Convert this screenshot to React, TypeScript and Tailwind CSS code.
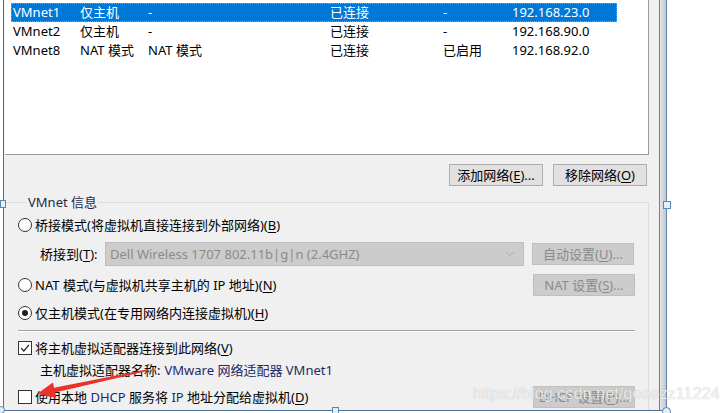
import { ChevronDown } from 'lucide-react';

interface NetRow {
  name: string;
  type: string;
  ext: string;
  host: string;
  dhcp: string;
  subnet: string;
  selected?: boolean;
}

const rows: NetRow[] = [
  { name: 'VMnet0', type: '桥接模式', ext: 'Dell Wireless 1707 802.11b|g|n (2.4GHZ)', host: '-', dhcp: '-', subnet: '-' },
  { name: 'VMnet1', type: '仅主机', ext: '-', host: '已连接', dhcp: '-', subnet: '192.168.23.0', selected: true },
  { name: 'VMnet2', type: '仅主机', ext: '-', host: '已连接', dhcp: '-', subnet: '192.168.90.0' },
  { name: 'VMnet8', type: 'NAT 模式', ext: 'NAT 模式', host: '已连接', dhcp: '已启用', subnet: '192.168.92.0' },
];

function Radio({ checked }: { checked?: boolean }) {
  return (
    <div className="w-[14px] h-[14px] rounded-full border border-[#333333] bg-white flex items-center justify-center shrink-0">
      {checked && <div className="w-[6px] h-[6px] rounded-full bg-[#222222]" />}
    </div>
  );
}

function Check({ checked }: { checked?: boolean }) {
  return (
    <div className="w-[14px] h-[14px] border border-[#333333] bg-white flex items-center justify-center shrink-0">
      {checked && (
        <svg width="10" height="10" viewBox="0 0 10 10">
          <path d="M1 5.2 L3.8 8 L9 1.8" fill="none" stroke="#222" strokeWidth="1.2" />
        </svg>
      )}
    </div>
  );
}

function Btn({ children, disabled, className = '' }: { children: React.ReactNode; disabled?: boolean; className?: string }) {
  return (
    <div
      className={
        'h-[22px] shrink-0 flex items-center justify-center border text-[13px] leading-none whitespace-nowrap ' +
        (disabled ? 'bg-[#cccccc] border-[#bfbfbf] text-[#8a8a8a] ' : 'bg-[#e1e1e1] border-[#adadad] text-black ') +
        className
      }
    >
      {children}
    </div>
  );
}

const U = ({ c }: { c: string }) => <span className="underline underline-offset-2">{c}</span>;

export default function App() {
  return (
    <div className="relative w-[725px] h-[413px] bg-white flex overflow-hidden font-['Noto_Sans','Noto_Sans_CJK_SC',sans-serif] text-[13px] text-black">
      <div className="ml-[3px] w-[664px] h-[411px] border-l border-b border-[#4d6e8e] flex">
        {/* dialog body */}
        <div className="w-[655px] bg-[#f0f0f0] flex flex-col">
          {/* list */}
          <div className="ml-[1px] mr-[10px] h-[155px] shrink-0 bg-white border-r border-b border-[#9a9a9a] overflow-hidden pl-[6px]">
            <div className="-mt-[16px] w-[606px]">
              {rows.map((r) => (
                <div
                  key={r.name}
                  className={
                    'h-[19px] flex items-center whitespace-nowrap leading-none ' +
                    (r.selected ? 'bg-[#0078d7] text-white outline outline-1 outline-dotted outline-[#d8944a] -outline-offset-1' : '')
                  }
                >
                  <div className="w-[67px] pl-[2px]">{r.name}</div>
                  <div className="w-[68px] pl-[2px]">{r.type}</div>
                  <div className="w-[182px] pl-[2px] overflow-hidden">{r.ext}</div>
                  <div className="w-[113px] pl-[2px]">{r.host}</div>
                  <div className="w-[69px] pl-[2px]">{r.dhcp}</div>
                  <div className="w-[107px] pl-[2px]">{r.subnet}</div>
                </div>
              ))}
            </div>
          </div>

          {/* list buttons */}
          <div className="mt-[9px] pr-[12px] flex justify-end gap-[10px]">
            <Btn className="w-[94px]">
              添加网络(<U c="E" />)...
            </Btn>
            <Btn className="w-[94px]">
              移除网络(<U c="O" />)
            </Btn>
          </div>

          {/* group box */}
          <fieldset className="mt-[8px] mr-[10px] min-w-0 flex-1 border-t border-r border-[#dcdcdc] pl-[14px] pr-[13px]">
            <legend className="ml-[9px] px-[1px] text-[13px] leading-[16px] text-[#1f2848]">VMnet 信息</legend>
            <div className="mt-[6px] h-[18px] flex items-center gap-[3px] leading-none">
              <Radio />
              <span>
                桥接模式(将虚拟机直接连接到外部网络)(<U c="B" />)
              </span>
            </div>

            <div className="mt-[8px] h-[24px] flex items-center leading-none">
              <div className="w-[87px] shrink-0 pl-[22px] whitespace-nowrap">
                桥接到(<U c="T" />):
              </div>
              <div className="w-[419px] shrink-0 h-[24px] bg-[#cccccc] border border-[#bfbfbf] flex items-center pl-[4px] pr-[6px] text-[#8a8a8a]">
                <span className="flex-1 whitespace-nowrap">Dell Wireless 1707 802.11b|g|n (2.4GHZ)</span>
                <ChevronDown size={14} strokeWidth={1.2} color="#9a9a9a" />
              </div>
              <Btn disabled className="ml-[8px] w-[102px]">
                自动设置(<U c="U" />)...
              </Btn>
            </div>

            <div className="mt-[8px] h-[22px] flex items-center gap-[3px] leading-none">
              <Radio />
              <span className="flex-1">
                NAT 模式(与虚拟机共享主机的 IP 地址)(<U c="N" />)
              </span>
              <Btn disabled className="w-[102px]">
                NAT 设置(<U c="S" />)...
              </Btn>
            </div>

            <div className="mt-[8px] h-[18px] flex items-center gap-[3px] leading-none">
              <Radio checked />
              <span>
                仅主机模式(在专用网络内连接虚拟机)(<U c="H" />)
              </span>
            </div>

            <div className="mt-[8px] h-px bg-[#a0a0a0] border-b border-white box-content" />

            <div className="mt-[7px] h-[18px] flex items-center gap-[3px] leading-none">
              <Check checked />
              <span>
                将主机虚拟适配器连接到此网络(<U c="V" />)
              </span>
            </div>

            <div className="mt-[4px] h-[18px] flex items-center pl-[22px] leading-none">
              主机虚拟适配器名称: <span className="ml-[4px] text-[#1c2a6a]">VMware 网络适配器 VMnet1</span>
            </div>

            <div className="mt-[7px] h-[22px] flex items-center gap-[3px] leading-none">
              <Check />
              <span className="flex-1">
                使用本地 <span className="text-[#1c2a6a]">DHCP</span> 服务将 <span className="text-[#1c2a6a]">IP</span> 地址分配给虚拟机(<U c="D" />)
              </span>
              <Btn disabled className="w-[102px]">
                DHCP 设置(<U c="P" />)...
              </Btn>
            </div>
          </fieldset>
        </div>

        {/* right frame edge */}
        <div className="w-[8px] border-x border-[#5b87b5] bg-gradient-to-r from-[#e6e6e6] to-[#c4c4c4]" />
      </div>

      {/* annotation overlay: arrow, handles, watermark */}
      <svg className="absolute left-0 top-0 pointer-events-none" width="725" height="413">
        <polygon
          points="37,394 52.9,382.4 54.1,387.8 147.8,369.2 148.2,370.8 55.1,392.6 56.3,398"
          fill="#e8322a"
        />
      </svg>
      <div className="absolute left-0 top-[200px] w-[6px] h-[8px] border border-[#5b87b5] bg-[#dff0f8]" />
      <div className="absolute left-[663px] top-[201px] w-[8px] h-[8px] border border-[#5b87b5] bg-[#dff0f8]" />
      <div className="absolute left-[-3px] top-[406px] w-[8px] h-[8px] rounded-full border border-[#5b87b5] bg-[#dff0f8]" />
      <div className="absolute left-[332px] top-[407px] w-[7px] h-[8px] border border-[#5b87b5] bg-[#dff0f8]" />
      <div className="absolute left-[662px] top-[407px] w-[9px] h-[9px] rounded-full border border-[#5b87b5] bg-[#dff0f8]" />
      <div className="absolute left-[473px] top-[383px] text-[16.3px] leading-[20px] text-white/80 [text-shadow:0_0_1px_rgba(0,0,0,0.3)] font-['Liberation_Sans',sans-serif] pointer-events-none whitespace-nowrap">
        https://blog.csdn.net/qeeezz11224
      </div>
    </div>
  );
}
